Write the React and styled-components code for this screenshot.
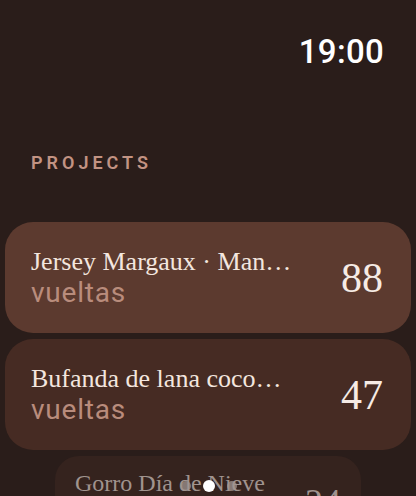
import React from "react";
import styled, { createGlobalStyle } from "styled-components";

const Global = createGlobalStyle`
  html, body { margin: 0; padding: 0; background: #2a1d1a; }
  body { width: 416px; height: 496px; overflow: hidden; }
`;

const Screen = styled.div`
  position: relative;
  width: 416px;
  height: 496px;
  overflow: hidden;
  background: #2a1d1a;
  display: flex;
  flex-direction: column;
`;

const StatusBar = styled.div`
  display: flex;
  justify-content: flex-end;
  padding: 34px 32px 0 0;
`;

const Time = styled.div`
  font-family: Roboto, "Liberation Sans", sans-serif;
  font-size: 33px;
  font-weight: 500;
  line-height: 36px;
  color: #ffffff;
  letter-spacing: 0.3px;
`;

const SectionTitle = styled.div`
  margin: 82px 0 0 31px;
  font-family: Roboto, "Liberation Sans", sans-serif;
  font-size: 18px;
  font-weight: 600;
  line-height: 22px;
  letter-spacing: 4px;
  color: #c29383;
`;

const List = styled.div`
  display: flex;
  flex-direction: column;
  align-items: center;
  gap: 6px;
  margin-top: 48px;
`;

const Card = styled.div`
  box-sizing: border-box;
  width: ${(p) => (p.$far ? 306 : 406)}px;
  height: ${(p) => (p.$far ? 100 : 111)}px;
  flex-shrink: 0;
  border-radius: ${(p) => (p.$far ? 24 : 28)}px;
  background: ${(p) => p.$bg};
  display: flex;
  align-items: ${(p) => (p.$far ? "flex-start" : "center")};
  justify-content: space-between;
  padding: ${(p) => (p.$far ? "12px 20px 0 20px" : "0 28px 0 26px")};
`;

const Texts = styled.div`
  display: flex;
  flex-direction: column;
  min-width: 0;
`;

const Title = styled.div`
  font-family: "Liberation Serif", "DejaVu Serif", serif;
  font-size: ${(p) => (p.$far ? 24 : 26)}px;
  line-height: 30px;
  color: ${(p) => (p.$far ? "#a0938e" : "#f3e6df")};
  white-space: nowrap;
`;

const Unit = styled.div`
  font-family: Roboto, "Liberation Sans", sans-serif;
  font-size: 28px;
  line-height: 32px;
  letter-spacing: 0.8px;
  color: #b98c7c;
`;

const Count = styled.div`
  font-family: "Liberation Serif", "DejaVu Serif", serif;
  font-size: ${(p) => (p.$far ? 36 : 42)}px;
  line-height: 1;
  color: ${(p) => (p.$far ? "#a0938e" : "#f6ebe5")};
  margin-top: ${(p) => (p.$far ? "16px" : "0")};
`;

const Dots = styled.div`
  position: absolute;
  left: 0;
  right: 0;
  top: 480px;
  display: flex;
  justify-content: center;
  align-items: center;
  gap: 12px;
  padding-left: 2px;
`;

const Dot = styled.span`
  width: ${(p) => (p.$active ? 12 : 10)}px;
  height: ${(p) => (p.$active ? 12 : 10)}px;
  border-radius: 50%;
  background: ${(p) => (p.$active ? "#ffffff" : "rgba(160, 150, 145, 0.75)")};
`;

const projects = [
  { title: "Jersey Margaux · Man…", count: 88, bg: "#5c3a2f" },
  { title: "Bufanda de lana coco…", count: 47, bg: "#462b23" },
  { title: "Gorro Día de Nieve", count: 24, bg: "#35231e", far: true },
];

export default function App() {
  return (
    <>
      <Global />
      <Screen>
        <StatusBar>
          <Time>19:00</Time>
        </StatusBar>
        <SectionTitle>PROJECTS</SectionTitle>
        <List>
          {projects.map((p) => (
            <Card key={p.title} $bg={p.bg} $far={p.far}>
              <Texts>
                <Title $far={p.far}>{p.title}</Title>
                {!p.far && <Unit>vueltas</Unit>}
              </Texts>
              <Count $far={p.far}>{p.count}</Count>
            </Card>
          ))}
        </List>
        <Dots>
          <Dot />
          <Dot $active />
          <Dot />
        </Dots>
      </Screen>
    </>
  );
}
